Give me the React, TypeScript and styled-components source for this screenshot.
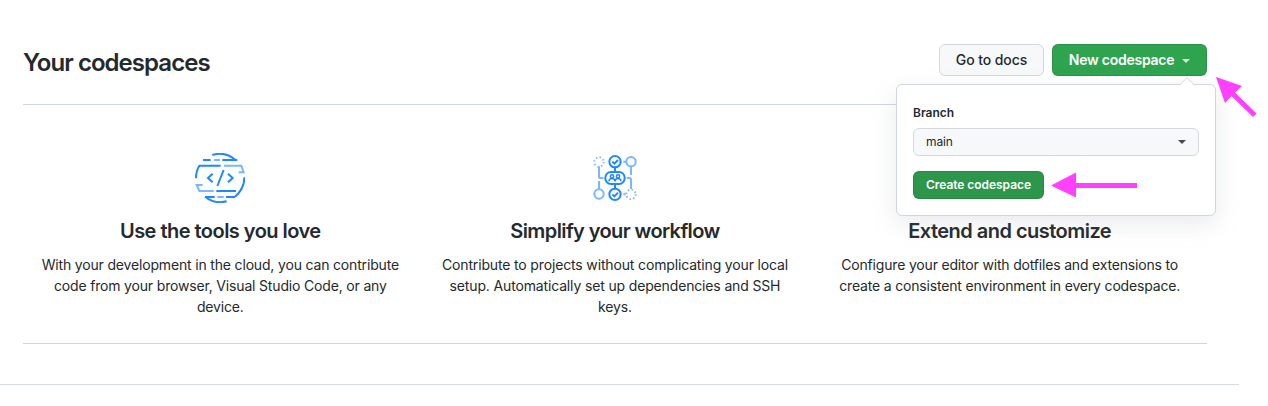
import React from 'react';
import styled, { createGlobalStyle } from 'styled-components';

const GlobalStyle = createGlobalStyle`
  * { box-sizing: border-box; }
  body {
    margin: 0;
    background: #fff;
    color: #24292e;
    font-family: Inter, "Liberation Sans", sans-serif;
    font-size: 14px;
    line-height: 21px;
    overflow: hidden;
  }
`;

const Page = styled.div`
  position: relative;
  width: 1268px;
  height: 406px;
`;

const Section = styled.section`
  width: 1239px;
  height: 385px;
  padding: 44px 32px 0 23px;
  border-bottom: 1px solid #d6dbe2;
`;

const Header = styled.header`
  display: flex;
  justify-content: space-between;
  align-items: flex-start;
  height: 61px;
  border-bottom: 1px solid #d0d5de;
`;

const Title = styled.h1`
  margin: 1px 0 0;
  font-size: 24px;
  line-height: 36px;
  font-weight: 600;
  letter-spacing: -0.95px;
`;

const Actions = styled.div`
  position: relative;
  display: flex;
  gap: 8px;
`;

const Button = styled.button<{ $primary?: boolean; $small?: boolean; $width: number }>`
  display: flex;
  align-items: center;
  justify-content: center;
  gap: 8px;
  width: ${(p) => p.$width}px;
  height: ${(p) => (p.$small ? 28 : 32)}px;
  padding: 0 0 ${(p) => (p.$small ? 1 : 2)}px;
  border: 1px solid ${(p) => (p.$primary ? 'rgba(27, 31, 35, 0.15)' : '#d5d8da')};
  border-radius: 6px;
  background: ${(p) => (p.$primary ? (p.$small ? '#2c974b' : '#2ea44f') : '#f6f8fa')};
  color: ${(p) => (p.$primary ? '#fff' : '#24292e')};
  font-family: inherit;
  font-size: ${(p) => (p.$small ? 12 : 14)}px;
  font-weight: ${(p) => (p.$primary ? 600 : 500)};
  letter-spacing: ${(p) => (p.$small ? -0.05 : p.$primary ? -0.25 : -0.08)}px;
  white-space: nowrap;
`;

const Caret = styled.span<{ $color: string; $drop?: number }>`
  margin-top: ${(p) => p.$drop ?? 0}px;
  border: 4px solid transparent;
  border-top-color: ${(p) => p.$color};
  border-bottom-width: 0;
`;

const Popover = styled.div`
  position: absolute;
  z-index: 2;
  top: 40px;
  right: -9px;
  display: flex;
  flex-direction: column;
  align-items: flex-start;
  width: 320px;
  height: 132px;
  padding: 18px 16px 0;
  border: 1px solid #d0d5de;
  border-radius: 6px;
  background: #fff;
  box-shadow: 0 8px 24px rgba(149, 157, 165, 0.2);
`;

const Pointer = styled.svg`
  position: absolute;
  top: -8px;
  right: 20px;
`;

const Label = styled.label`
  font-size: 12px;
  line-height: 20px;
  font-weight: 600;
`;

const Select = styled.div`
  display: flex;
  align-items: center;
  justify-content: space-between;
  width: 286px;
  height: 28px;
  margin: 5px 0 15px;
  padding: 0 12px 1px;
  border: 1px solid #d5d8da;
  border-radius: 6px;
  background: #f6f8fa;
  font-size: 12px;
  letter-spacing: -0.1px;
`;

const Features = styled.div`
  display: grid;
  grid-template-columns: repeat(3, 1fr);
  height: 239px;
  padding-top: 48px;
  border-bottom: 1px solid #d1d5da;
`;

const Feature = styled.article`
  display: flex;
  flex-direction: column;
  align-items: center;
  text-align: center;
`;

const IconSlot = styled.div`
  height: 50px;
`;

const FeatureTitle = styled.h2<{ $tracking: number }>`
  margin: 13px 0 8px;
  font-size: 20px;
  line-height: 30px;
  font-weight: 600;
  letter-spacing: ${(p) => p.$tracking}px;
`;

const FeatureText = styled.p<{ $tracking: number }>`
  margin: 0;
  white-space: pre-line;
  letter-spacing: ${(p) => p.$tracking}px;
`;

const Annotations = styled.svg`
  position: absolute;
  inset: 0;
  z-index: 3;
  pointer-events: none;
`;

const DARK = '#1f88ff';
const LIGHT = '#79b8ff';

const ToolsIcon = () => (
  <svg width="50" height="50" viewBox="45 39 150 150" fill="none" stroke={DARK} strokeWidth="6">
    <path d="M97 45C122 37 148 44 167 60" />
    <path d="M69 60H92M127 60H172" />
    <path d="M122 77H58C51 88 48 99 48 115" />
    <path d="M109 153H168M193 112C193 136 182 156 165 170" />
    <path d="M75 171H104M138 171H165M75 170C93 184 116 190 140 184" />
    <path d="M98 101L84 114L98 127M144 101L158 114L144 127M131 90L112 138" />
    <g stroke={LIGHT}>
      <path d="M102 60H120M132 77H184L191 97H176" />
      <path d="M68 135H50L58 153H101M112 171H131" />
    </g>
  </svg>
);

const WorkflowIcon = () => (
  <svg width="50" height="50" viewBox="30 24 150 150" fill="none" stroke={DARK} strokeWidth="6">
    <g stroke={LIGHT}>
      <circle cx="57" cy="51" r="14" strokeDasharray="4 7" />
      <circle cx="153" cy="148" r="14" strokeDasharray="4 7" />
      <circle cx="153" cy="50" r="14" />
      <circle cx="57" cy="147" r="14" />
      <path d="M57 64V95Q57 99 62 99H70M57 133V108M153 64V90M140 99H148Q153 99 153 104V132M130 50H139M130 148H137" />
    </g>
    <path d="M105 67V80M105 118V131" />
    <circle cx="105" cy="50" r="17" />
    <circle cx="105" cy="148" r="17" />
    <path d="M97 50L103 56L114 45M97 148L103 154L114 143" />
    <rect x="76" y="81" width="58" height="36" rx="17" />
    <circle cx="96" cy="94" r="5" strokeWidth="4.5" />
    <circle cx="114" cy="94" r="5" strokeWidth="4.5" />
    <path d="M87 109C87 98 104 98 105 109C106 98 123 98 123 109" strokeWidth="4.5" />
  </svg>
);

const features = [
  {
    title: 'Use the tools you love',
    titleTracking: -0.53,
    textTracking: -0.17,
    text: 'With your development in the cloud, you can contribute\ncode from your browser, Visual Studio Code, or any\ndevice.',
    icon: <ToolsIcon />,
  },
  {
    title: 'Simplify your workflow',
    titleTracking: -0.6,
    textTracking: -0.15,
    text: 'Contribute to projects without complicating your local\nsetup. Automatically set up dependencies and SSH\nkeys.',
    icon: <WorkflowIcon />,
  },
  {
    title: 'Extend and customize',
    titleTracking: -0.52,
    textTracking: -0.18,
    text: 'Configure your editor with dotfiles and extensions to\ncreate a consistent environment in every codespace.',
    icon: null,
  },
];

export default function App() {
  return (
    <Page>
      <GlobalStyle />
      <Section>
        <Header>
          <Title>Your codespaces</Title>
          <Actions>
            <Button $width={105}>Go to docs</Button>
            <Button $primary $width={155}>
              New codespace
              <Caret $color="rgba(255, 255, 255, 0.8)" $drop={4} />
            </Button>
            <Popover>
              <Pointer width="16" height="9" viewBox="0 0 16 9">
                <path d="M0.5 8.5L8 1L15.5 8.5V9H0.5Z" fill="#fff" />
                <path d="M0.5 8L8 0.8L15.5 8" fill="none" stroke="#d0d5de" />
              </Pointer>
              <Label>Branch</Label>
              <Select>
                main
                <Caret $color="#444a50" $drop={1} />
              </Select>
              <Button $primary $small $width={131}>
                Create codespace
              </Button>
            </Popover>
          </Actions>
        </Header>
        <Features>
          {features.map((f) => (
            <Feature key={f.title}>
              <IconSlot>{f.icon}</IconSlot>
              <FeatureTitle $tracking={f.titleTracking}>{f.title}</FeatureTitle>
              <FeatureText $tracking={f.textTracking}>{f.text}</FeatureText>
            </Feature>
          ))}
        </Features>
      </Section>
      <Annotations width="1268" height="406" viewBox="0 0 1268 406" fill="#ff40ff">
        <path d="M1216 77L1242 86L1235 92.5L1256.5 113.5L1253 117L1231.5 96L1225 103Z" />
        <path d="M1051 185.5L1076 172.5V183H1137V188H1076V197.5Z" />
      </Annotations>
    </Page>
  );
}
